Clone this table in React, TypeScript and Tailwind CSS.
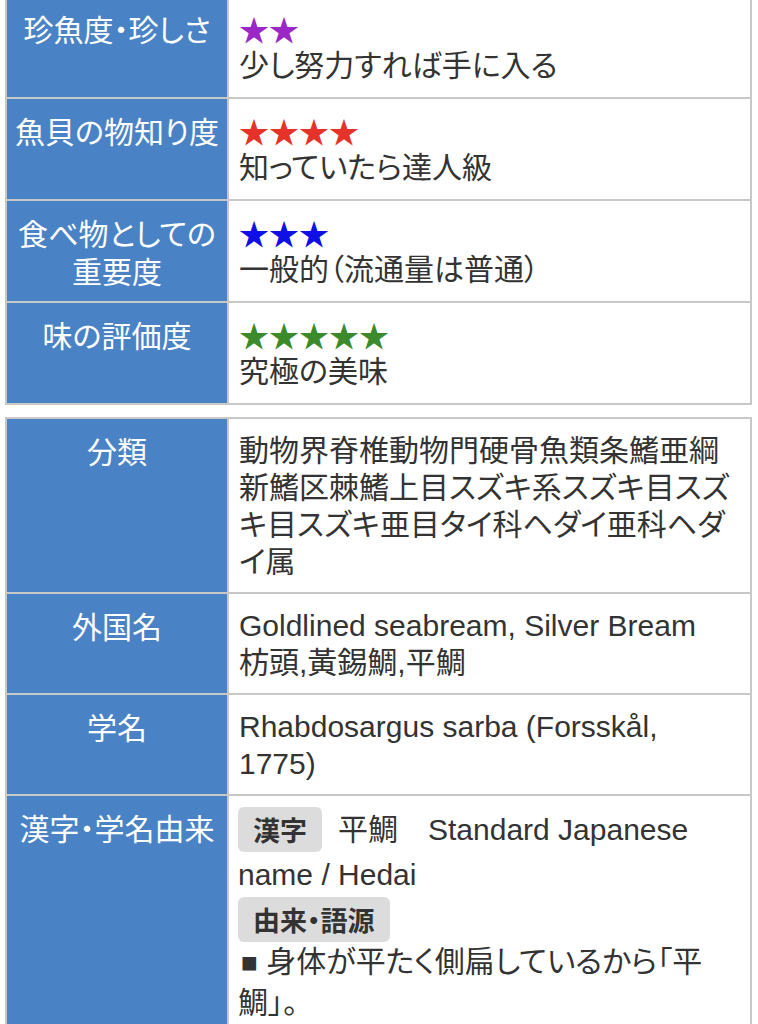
import type { ReactNode } from 'react';

const jp = "font-['Noto_Sans_CJK_JP',sans-serif] [font-feature-settings:'palt']";
const mixed = "font-['Liberation_Sans','Noto_Sans_CJK_JP',sans-serif] [font-feature-settings:'palt']";

const ratings = [
  { label: '珍魚度・珍しさ', stars: '★★', color: 'text-[#9a28c6]', note: '少し努力すれば手に入る' },
  { label: '魚貝の物知り度', stars: '★★★★', color: 'text-[#e6332a]', note: '知っていたら達人級' },
  { label: '食べ物としての重要度', stars: '★★★', color: 'text-[#1010e6]', note: '一般的（流通量は普通）' },
  { label: '味の評価度', stars: '★★★★★', color: 'text-[#3b8a2b]', note: '究極の美味' },
];

function Row({ label, children, first, tight }: { label: ReactNode; children: ReactNode; first?: boolean; tight?: boolean }) {
  return (
    <div className={first ? 'flex' : 'flex border-t-2 border-[#c8c8c8]'}>
      <div
        className={`w-[222px] shrink-0 border-r-2 border-[#c8c8c8] bg-[#4a83c5] px-2 pb-3 text-center text-[30px] text-white ${jp} ${
          tight ? 'pt-[13px] leading-[37px]' : 'pt-3 leading-[38px]'
        }`}
      >
        {label}
      </div>
      <div
        className={`min-w-0 flex-1 pl-[10px] pr-[10px] pb-3 text-[30px] text-[#333] ${mixed} ${
          tight ? 'pt-[13px] leading-[37px]' : 'pt-3 leading-[38px]'
        }`}
      >
        {children}
      </div>
    </div>
  );
}

export default function App() {
  return (
    <div className="min-h-[1024px] overflow-hidden bg-white">
      {/* Ratings table */}
      <div className="ml-[5px] mt-[-5px] w-[747px] border-2 border-[#c8c8c8]">
        {ratings.map((r, idx) => (
          <Row
            key={idx}
            first={idx === 0}
            label={
              r.label === '食べ物としての重要度' ? (
                <>
                  食べ物としての
                  <br />
                  重要度
                </>
              ) : (
                r.label
              )
            }
          >
            <div className={`${r.color} font-['Noto_Sans_CJK_JP',sans-serif]`}>{r.stars}</div>
            <div>{r.note}</div>
          </Row>
        ))}
      </div>

      {/* Details table */}
      <div className="ml-[5px] mt-3 w-[747px] border-2 border-[#c8c8c8]">
        <Row first tight label="分類">
          動物界脊椎動物門硬骨魚類条鰭亜綱
          <br />
          新鰭区棘鰭上目スズキ系スズキ目スズ
          <br />
          キ目スズキ亜目タイ科ヘダイ亜科ヘダ
          <br />
          イ属
        </Row>
        <Row tight label="外国名">
          Goldlined seabream, Silver Bream
          <br />
          枋頭,黃錫鯛,平鯛
        </Row>
        <Row tight label="学名">
          Rhabdosargus sarba (Forsskål,
          <br />
          1775)
        </Row>
        <div className="flex border-t-2 border-[#c8c8c8]">
          <div className={`w-[222px] shrink-0 border-r-2 border-[#c8c8c8] bg-[#4a83c5] px-2 pt-3 text-center text-[30px] leading-[38px] text-white ${jp}`}>
            漢字・学名由来
          </div>
          <div className={`min-w-0 flex-1 pl-[9px] pr-[10px] pt-[11px] text-[30px] text-[#333] ${mixed}`}>
            <p className="leading-[45px]">
              <span className={`mr-4 inline-block rounded-md bg-[#dcdcdc] px-[15px] py-[6px] align-top text-[27px] font-bold leading-[33px] ${jp}`}>
                漢字
              </span>
              平鯛　Standard Japanese name / Hedai
            </p>
            <div>
              <span className={`inline-block rounded-md bg-[#dcdcdc] px-[15px] py-[6px] align-top text-[27px] font-bold leading-[33px] ${jp}`}>
                由来・語源
              </span>
            </div>
            <p className="leading-[40px]">
              <span className="ml-[3px] text-[28px]">■</span> 身体が平たく側扁しているから「平
              <br />
              鯛」。
              <br />
              <span className="ml-[3px] text-[28px]">■</span> 古くは「へだい」と呼ばれ、西日本で「平」は多い。
            </p>
          </div>
        </div>
      </div>
    </div>
  );
}
